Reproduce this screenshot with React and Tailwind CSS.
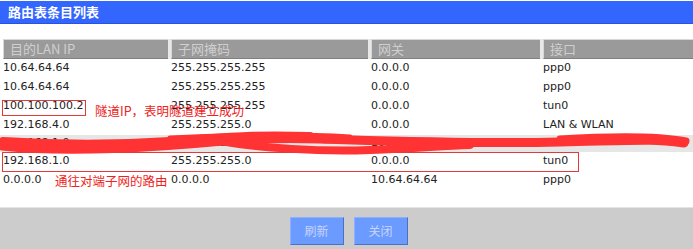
const rows = [
  { ip: "10.64.64.64", mask: "255.255.255.255", gw: "0.0.0.0", ifc: "ppp0" },
  { ip: "10.64.64.64", mask: "255.255.255.255", gw: "0.0.0.0", ifc: "ppp0" },
  { ip: "100.100.100.2", mask: "255.255.255.255", gw: "0.0.0.0", ifc: "tun0" },
  { ip: "192.168.4.0", mask: "255.255.255.0", gw: "0.0.0.0", ifc: "LAN & WLAN" },
  { ip: "192.168.1.0", mask: "255.255.255.0", gw: "100.100.100.2", ifc: "tun0", hidden: true },
  { ip: "192.168.1.0", mask: "255.255.255.0", gw: "0.0.0.0", ifc: "tun0" },
  { ip: "0.0.0.0", mask: "0.0.0.0", gw: "10.64.64.64", ifc: "ppp0" },
];

const headers = ["目的LAN IP", "子网掩码", "网关", "接口"];

export default function App() {
  return (
    <div className="relative w-[693px] h-[249px] bg-white overflow-hidden font-['DejaVu_Sans','Noto_Sans_CJK_SC',sans-serif] text-[11px] text-[#222]">
      <div className="pt-[1px]">
        <div className="h-[23px] bg-[#3366ff] border-b border-[#2a55d8] pl-[8px] flex items-center text-white font-bold text-[13px] font-['Noto_Sans_CJK_SC',sans-serif]">
          路由表条目列表
        </div>
      </div>

      <div className="mt-[15px] pl-[3px]">
        <div className="grid grid-cols-[168px_200px_172px_1fr] h-[20px] bg-[#e8e8e8]">
          {headers.map((h, i) => (
            <div
              key={h}
              className={`h-[20px] bg-[#9a9a9a] border-t border-l border-[#d8d8d8] border-b-[#808080] border-b pl-[6px] flex items-center text-[#cfcfcf] text-[13px] font-['Noto_Sans_CJK_SC',sans-serif] ${i < 3 ? "mr-[3px]" : ""}`}
            >
              {h}
            </div>
          ))}
        </div>

        {rows.map((r, i) => (
          <div
            key={i}
            className={`grid grid-cols-[168px_200px_172px_1fr] items-center ${r.hidden ? "h-[17px] bg-[#e6e6e6] -ml-[3px] pl-[3px]" : "h-[19px]"}`}
          >
            <div>{r.ip}</div>
            <div>{r.mask}</div>
            <div>{r.gw}</div>
            <div>{r.ifc}</div>
          </div>
        ))}
      </div>

      <div className="absolute left-0 right-0 bottom-0 h-[42px] bg-[#cccccc] border-t border-[#e4e4e4] flex justify-center items-start pt-[9px] gap-[10px] pl-[4px]">
        <button className="w-[54px] h-[28px] bg-[#6b9bff] border border-[#8fb0ff] border-b-[#4f6fc0] border-r-[#4f6fc0] text-[#c7d5fb] text-[12px] font-['Noto_Sans_CJK_SC',sans-serif]">
          刷新
        </button>
        <button className="w-[54px] h-[28px] bg-[#6b9bff] border border-[#8fb0ff] border-b-[#4f6fc0] border-r-[#4f6fc0] text-[#c7d5fb] text-[12px] font-['Noto_Sans_CJK_SC',sans-serif]">
          关闭
        </button>
      </div>

      {/* red annotations */}
      <div className="absolute left-[2px] top-[100px] w-[84px] h-[16px] border border-[#e03a3a]" />
      <div className="absolute left-[95px] top-[103px] text-[#ee2222] text-[12.5px] leading-[16px] font-['Noto_Sans_CJK_SC',sans-serif]">
        隧道IP，表明隧道建立成功
      </div>
      <div className="absolute left-[2px] top-[152px] w-[577px] h-[20px] border border-[#e03a3a]" />
      <div className="absolute left-[55px] top-[173px] text-[#ee2222] text-[12.5px] leading-[16px] font-['Noto_Sans_CJK_SC',sans-serif]">
        通往对端子网的路由
      </div>

      <svg className="absolute left-0 top-0" width="693" height="249" viewBox="0 0 693 249">
        <g fill="none" stroke="#ff3333" strokeLinecap="round" strokeLinejoin="round">
          <path d="M2,146 C40,150 100,150 160,146 S250,137 320,139 S470,144 560,142 S650,139 684,143" strokeWidth="9" />
          <path d="M3,141 C50,144 110,145 170,141 S250,134 310,136" strokeWidth="8" />
          <path d="M3,145 C40,147 70,148 110,146" strokeWidth="9" />
          <path d="M220,141 C260,148 320,152 370,150 S440,146 470,145" strokeWidth="8" />
          <path d="M560,139 C610,136 660,136 686,141" strokeWidth="7" />
          <path d="M170,138 C230,135 300,134 350,137" strokeWidth="5" />
        </g>
      </svg>
    </div>
  );
}
